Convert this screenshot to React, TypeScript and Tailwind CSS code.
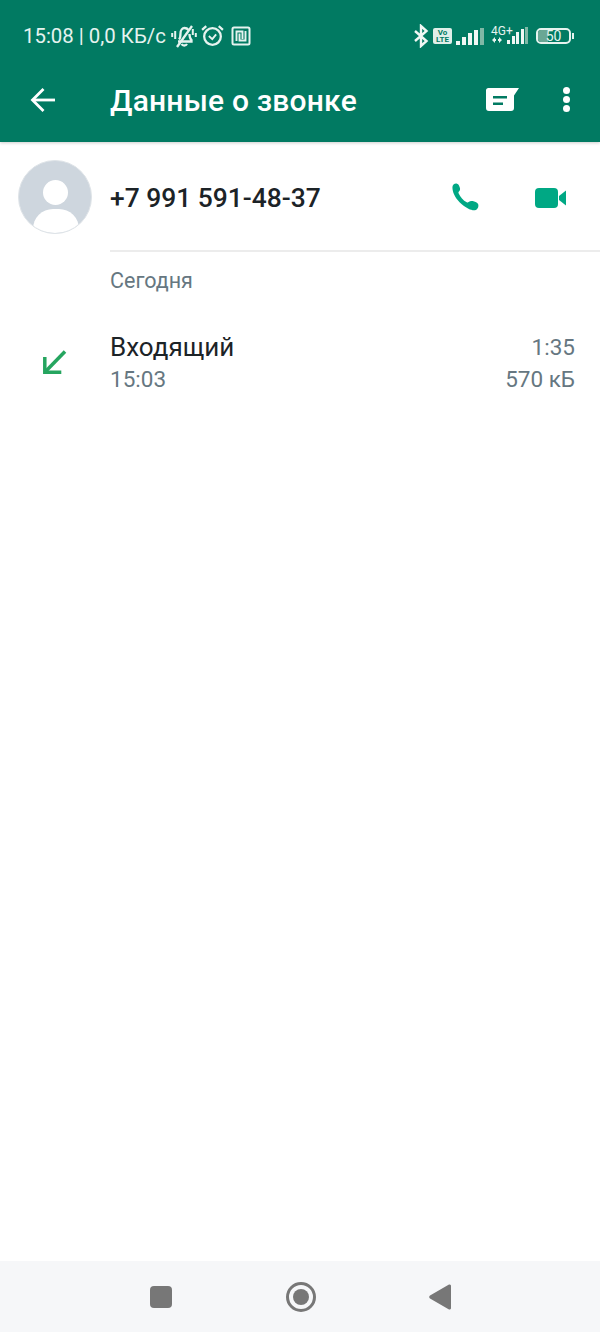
function StatusIcons() {
  return (
    <div className="flex items-center">
      {/* bell off */}
      <svg width="26" height="24" viewBox="0 0 26 24" fill="none" stroke="#e6f3ef" strokeWidth="2.300" className="ml-[5px] -mt-[1px]">
        <path d="M8 15.500c1.500-1.500 1.500-3.500 1.500-6 0-3.500 2-5.500 4-5.500 1.700 0 3 .7 4 2M18.500 10c0 2.500.3 4.500 2 6v1.500H7" />
        <path d="M10.500 20c1.200 2 4.300 2 5.500 0" />
        <path d="M6 23 21 2" />
        <path d="M1.200 9v4M24.800 9v4M4.200 7v8M21.800 5v6" strokeWidth="2" />
      </svg>
      {/* alarm */}
      <svg width="25" height="25" viewBox="0 0 24 24" fill="none" stroke="#e6f3ef" strokeWidth="2.200" className="ml-[3px] -mt-[1px]">
        <circle cx="12" cy="13" r="8" />
        <path d="M8.500 12.500 11.800 15.500 15.500 11" strokeWidth="1.800" />
        <path d="M2 6.500 6 3M22 6.500 18 3" />
      </svg>
      {/* nfc */}
      <svg width="20" height="20" viewBox="0 0 20 20" fill="none" stroke="#e6f3ef" strokeWidth="2" className="ml-[6px]">
        <rect x="1.500" y="1.500" width="17" height="17" rx="1.500" />
        <path d="M5.500 15V5.500h6V13M14.500 5v9.500h-6V7.500" strokeWidth="1.900" />
      </svg>
    </div>
  )
}

function Bars({ small }: { small?: boolean }) {
  const heights = [4, 8, 12, 15, 17]
  return (
    <div className={small ? 'flex items-end gap-[1.5px] h-[17px]' : 'flex items-end gap-[2px] h-[17px]'}>
      {heights.map((h, i) => (
        <div
          key={i}
          className={(small ? 'w-[3px] ' : 'w-[4px] ') + (i === 4 ? 'bg-[#7fb8a6]' : 'bg-[#f0f7f4]')}
          style={{ height: h }}
        />
      ))}
    </div>
  )
}

export default function App() {
  return (
    <div className="w-[600px] h-[1332px] flex flex-col bg-white font-['Roboto',sans-serif] overflow-hidden">
      <header className="h-[142px] bg-[#017a62] shadow-[0_1px_3px_rgba(0,0,0,0.2)] relative shrink-0 flex flex-col">
        {/* status bar */}
        <div className="h-[72px] pl-[23px] pr-[26px] flex items-center justify-between text-[#e6f3ef]">
          <div className="flex items-center">
            <span className="text-[20.400px] leading-none">15:08 | 0,0 КБ/с</span>
            <StatusIcons />
          </div>
          <div className="flex items-center">
            <svg width="16" height="24" viewBox="0 0 16 24" fill="none" stroke="#f0f7f4" strokeWidth="2.400">
              <path d="M2 7 13.500 17 8 22V2l5.500 5L2 17" />
            </svg>
            <div className="ml-[4px] w-[19px] h-[16px] bg-[#e0efe9] rounded-[2px] flex flex-col items-center justify-center text-[#017a62] text-[8px] font-bold leading-[7.500px]">
              <span>Vo</span>
              <span>LTE</span>
            </div>
            <div className="ml-[4px]">
              <Bars />
            </div>
            <div className="ml-[7px] relative w-[37px] h-[24px]">
              <span className="absolute left-0 top-[1px] text-[12px] leading-none text-[#e6f3ef]">4G+</span>
              <svg width="10" height="6" viewBox="0 0 10 6" fill="#e6f3ef" className="absolute left-[1px] bottom-[5px]">
                <path d="M0 3 3 0v2h1v2H3v2ZM10 3 7 0v2H6v2h1v2Z" />
              </svg>
              <div className="absolute right-0 bottom-[4px]">
                <Bars small />
              </div>
            </div>
            <div className="ml-[8px] flex items-center">
              <div className="w-[35px] h-[16px] border-2 border-[#e6f3ef] rounded-[5px] relative overflow-hidden flex items-center justify-center">
                <div className="absolute left-0 top-0 bottom-0 w-[10px] bg-[#6aa795]" />
                <span className="relative text-[14px] leading-none text-[#e6f3ef]">50</span>
              </div>
              <div className="w-[2px] h-[6px] bg-[#e6f3ef] ml-[1px]" />
            </div>
          </div>
        </div>

        {/* toolbar */}
        <div className="h-[60px] flex items-center pb-[5px]">
          <div className="w-[110px] pl-[30px] shrink-0">
            <svg width="26" height="26" viewBox="0 0 26 26" fill="none" stroke="#ffffff" strokeWidth="2.800" className="block">
              <path d="M25 13H3" />
              <path d="M13.500 2 2.500 13l11 11" />
            </svg>
          </div>
          <h1 className="text-[30px] font-medium text-white leading-none tracking-[0.2px] mt-[3px]">Данные о звонке</h1>
          <div className="ml-auto flex items-center pr-[30px]">
            <svg width="34" height="24" viewBox="0 0 34 24" className="mr-[43px]">
              <path d="M2.500 0H33L28 7.500V20a3 3 0 0 1-3 3H3a3 3 0 0 1-3-3V2.500A2.500 2.500 0 0 1 2.500 0Z" fill="#ffffff" />
              <rect x="7" y="8" width="14" height="2.500" fill="#017a62" />
              <rect x="7" y="14.500" width="10" height="2.500" fill="#017a62" />
            </svg>
            <div className="flex flex-col gap-[2px]">
              <div className="w-[7px] h-[7px] rounded-full bg-white" />
              <div className="w-[7px] h-[7px] rounded-full bg-white" />
              <div className="w-[7px] h-[7px] rounded-full bg-white" />
            </div>
          </div>
        </div>
      </header>

      <main className="flex-1 flex flex-col">
        {/* contact */}
        <div className="h-[110px] flex shrink-0">
          <div className="w-[110px] shrink-0 pl-[18px] pt-[18px]">
            <div className="w-[74px] h-[74px] rounded-full bg-[#ced6de] border border-[#dfe4e8] relative overflow-hidden">
              <div className="absolute left-[24px] top-[19px] w-[25px] h-[25px] rounded-full bg-white" />
              <div className="absolute left-[14px] top-[48px] w-[46px] h-[40px] rounded-full bg-white" />
            </div>
          </div>
          <div className="flex-1 border-b-2 border-[#ececec] flex items-center pt-[4px]">
            <span className="text-[26.400px] font-medium text-[#1c2327] leading-none">+7 991 591-48-37</span>
            <div className="ml-auto flex items-center pr-[33px]">
              <svg width="32" height="32" viewBox="0 0 28 28" fill="#00a884">
                <path d="M3 4.500C3 2.500 5 1 7 1.500c1.500.4 2 2 2.500 3.500.4 1.300.2 2.500-.8 3.300-.6.500-.5 1-.2 1.700 1.300 3 4 6.200 7 7.700.7.300 1.200.300 1.700-.2 1-.9 2.300-1.200 3.600-.8 1.500.5 3.700 1 4.500 2.300 1 1.700.2 4.500-1.800 5.400-1.500.7-4 .2-6.500-1C11 20.500 6.500 15.500 4.500 11 3.500 8.500 3 6.500 3 4.500Z" />
              </svg>
              <svg width="32" height="20" viewBox="0 0 32 20" fill="#00a884" className="ml-[54px]">
                <rect x="0" y="0" width="23" height="20" rx="4" />
                <path d="M24 8 31 2.500v15L24 12Z" />
              </svg>
            </div>
          </div>
        </div>

        <div className="pl-[110px] pt-[18px] text-[21.500px] leading-none text-[#667781]">Сегодня</div>

        {/* call row */}
        <div className="mt-[41px] flex pr-[25px]">
          <div className="w-[110px] shrink-0 pl-[43px] pt-[17px]">
            <svg width="24" height="24" viewBox="0 0 24 24" fill="none" stroke="#25a55f" strokeWidth="3.500">
              <path d="M22 1.500 3 21" />
              <path d="M1.800 7v15.200h16.500" />
            </svg>
          </div>
          <div className="flex-1 flex flex-col">
            <span className="text-[26px] leading-[28px] text-[#1c2327]">Входящий</span>
            <span className="text-[22.500px] leading-[24px] mt-[6px] text-[#667781]">15:03</span>
          </div>
          <div className="flex flex-col items-end">
            <span className="text-[22.500px] leading-[28px] text-[#667781]">1:35</span>
            <span className="text-[22.500px] leading-[24px] mt-[6px] text-[#667781]">570 кБ</span>
          </div>
        </div>
      </main>

      {/* nav bar */}
      <nav className="h-[71px] shrink-0 bg-[#f6f7f9] flex items-center justify-center">
        <div className="w-[22px] h-[22px] rounded-[4px] bg-[#777777]" />
        <div className="ml-[114px] w-[30px] h-[30px] rounded-full border-[3px] border-[#777777] flex items-center justify-center">
          <div className="w-[16px] h-[16px] rounded-full bg-[#777777]" />
        </div>
        <svg width="22" height="26" viewBox="0 0 22 26" fill="#777777" className="ml-[113px]">
          <path d="M20 .5a1.500 1.500 0 0 1 2 1.500v22a1.500 1.500 0 0 1-2 1.500L1 14.500a1.800 1.800 0 0 1 0-3Z" />
        </svg>
      </nav>
    </div>
  )
}
